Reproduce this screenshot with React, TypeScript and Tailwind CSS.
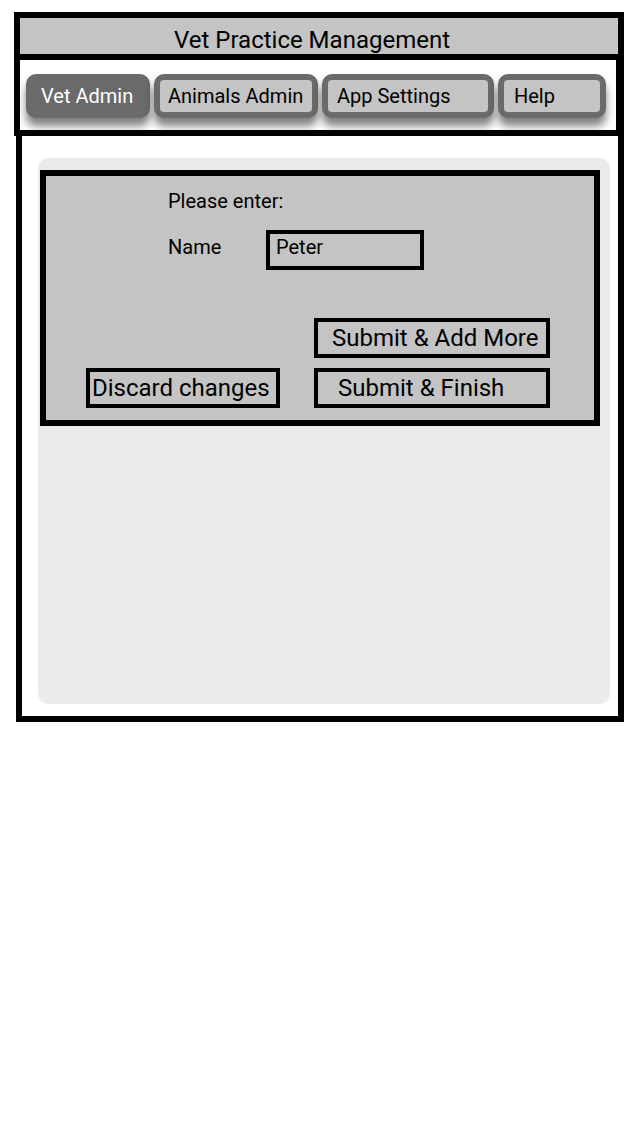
import { useState } from "react";

const tabs = [
  { name: "Vet Admin", pad: "pl-[9px]" },
  { name: "Animals Admin", pad: "pl-2" },
  { name: "App Settings", pad: "pl-[9px]" },
  { name: "Help", pad: "pl-[10px]" },
];

const actionButton =
  "h-10 border-4 border-black bg-[#c4c4c4] text-left text-2xl leading-8 whitespace-nowrap";

export default function App() {
  const [active, setActive] = useState("Vet Admin");
  const [name, setName] = useState("Peter");

  return (
    <div className="min-h-screen bg-white pt-3 pr-4 pl-[14px] font-[Roboto,sans-serif] text-black">
      <header className="border-6 border-black bg-[#c4c4c4]">
        <h1 className="h-9 pt-[6px] pr-[14px] text-center text-2xl leading-8">Vet Practice Management</h1>
      </header>

      <nav className="grid grid-cols-[124fr_164fr_172fr_108fr] gap-1 border-r-8 border-b-6 border-l-6 border-black px-[6px] pt-[14px] pr-[10px] pb-3">
        {tabs.map((tab) => (
          <button
            key={tab.name}
            type="button"
            aria-pressed={active === tab.name}
            onClick={() => setActive(tab.name)}
            className={`h-11 rounded-[10px] border-6 border-[#6a6a6a] pb-px text-left text-xl leading-8 whitespace-nowrap shadow-[0_8px_8px_rgba(0,0,0,0.5)] ${tab.pad} ${
              active === tab.name ? "bg-[#6a6a6a] text-white" : "bg-[#c4c4c4] text-black"
            }`}
          >
            {tab.name}
          </button>
        ))}
      </nav>

      <main className="ml-[2px] border-x-6 border-b-6 border-black pt-[22px] pr-2 pb-3 pl-4">
        <div className="min-h-[546px] rounded-[10px] bg-[#ebebeb] pt-3 pr-[10px] pl-[2px]">
          <form
            className="border-6 border-black bg-[#c4c4c4] pt-[10px] pr-11 pb-3 pl-10"
            onSubmit={(event) => event.preventDefault()}
          >
            <div className="pl-[82px] text-xl">
              <p className="leading-[30px]">Please enter:</p>
              <div className="mt-[14px] flex">
                <label htmlFor="name" className="w-[98px] leading-[34px]">
                  Name
                </label>
                <input
                  id="name"
                  type="text"
                  value={name}
                  onChange={(event) => setName(event.target.value)}
                  className="h-10 w-[158px] border-4 border-black bg-transparent px-[6px] pb-[6px] outline-none"
                />
              </div>
            </div>
            <div className="mt-12 grid grid-cols-[194fr_236fr] gap-x-[34px] gap-y-[10px]">
              <button type="submit" className={`${actionButton} col-start-2 pl-[14px]`}>
                Submit &amp; Add More
              </button>
              <button type="reset" onClick={() => setName("")} className={`${actionButton} pl-[2px]`}>
                Discard changes
              </button>
              <button type="submit" className={`${actionButton} pl-5`}>
                Submit &amp; Finish
              </button>
            </div>
          </form>
        </div>
      </main>
    </div>
  );
}
